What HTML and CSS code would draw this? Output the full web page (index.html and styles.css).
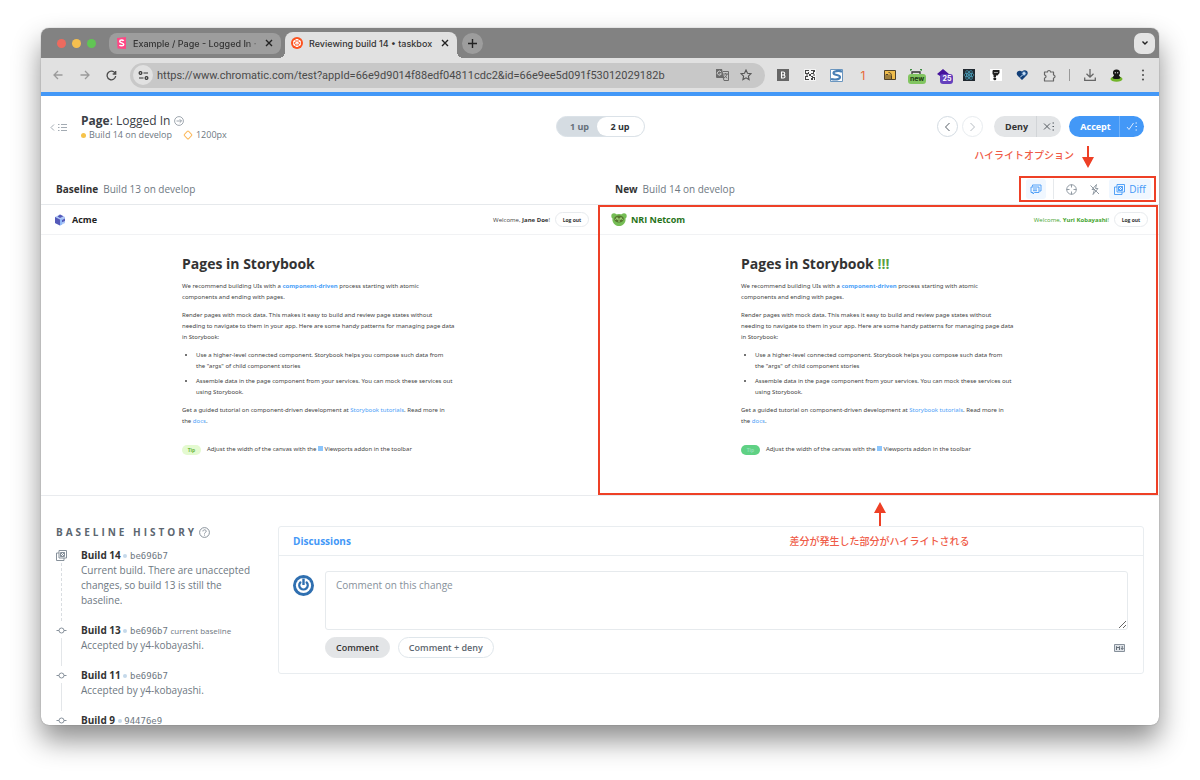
FILE: index.html
```html
<!DOCTYPE html>
<html>
<head>
<meta charset="utf-8">
<meta name="viewport" content="width=device-width, initial-scale=1.0">
<title>Reviewing build 14 • taskbox</title>
<link rel="stylesheet" href="styles.css">
</head>
<body>
<div class="window">

	<!-- browser tabs -->
	<div class="tabstrip">
		<div class="lights"><i class="red"></i><i class="yellow"></i><i class="green"></i></div>
		<div class="tab">
			<svg width="11" height="12" viewBox="0 0 11 12"><path fill="#ff4785" d="M1 1l9-1v12l-8.500-.5z"/><path fill="none" stroke="#fff" stroke-width="1.500" d="M7.600 3.900C7 2.800 3.700 2.700 3.700 4.400c0 1.800 4 1.200 4 3.100 0 1.800-3.500 1.700-4.200.3"/></svg>
			<span class="tab-title fade">Example / Page - Logged In ·</span>
			<button class="close" aria-label="Close tab"><svg width="8" height="8" viewBox="0 0 8 8"><path d="M1 1l6 6M7 1L1 7"/></svg></button>
		</div>
		<div class="tab active">
			<svg width="12" height="12" viewBox="0 0 12 12"><circle cx="6" cy="6" r="6" fill="#fc521f"/><g fill="none" stroke="#fff" stroke-width="1"><path d="M6 2.200l3.300 1.900v3.800L6 9.800 2.700 7.900V4.100z"/><path d="M6 2.200v3.600l3.300 2.100M2.700 4.100L6 5.800l-3.300 2.100M9.300 4.100L6 5.800v4"/></g></svg>
			<span class="tab-title">Reviewing build 14 • taskbox</span>
			<button class="close" aria-label="Close tab"><svg width="8" height="8" viewBox="0 0 8 8"><path d="M1 1l6 6M7 1L1 7"/></svg></button>
		</div>
		<button class="newtab" aria-label="New tab"><svg width="9" height="9" viewBox="0 0 9 9"><path d="M4.500 0v9M0 4.500h9"/></svg></button>
		<button class="tabmenu" aria-label="Search tabs"><svg width="8" height="6" viewBox="0 0 8 6"><path d="M1.500 1.500L4 4l2.500-2.500"/></svg></button>
	</div>

	<!-- address bar -->
	<div class="toolbar">
		<button class="nav off" aria-label="Back"><svg width="10" height="10" viewBox="0 0 10 10"><path d="M9.500 5H1M5 1L1 5l4 4"/></svg></button>
		<button class="nav off" aria-label="Forward"><svg width="10" height="10" viewBox="0 0 10 10"><path d="M.5 5H9M5 1l4 4-4 4"/></svg></button>
		<button class="nav" aria-label="Reload"><svg width="11" height="11" viewBox="0 0 11 11"><path d="M9.200 3.400A4.300 4.300 0 1 0 9.700 6M9.700 1v3H6.700"/></svg></button>
		<div class="address">
			<button class="site" aria-label="Site information"><svg width="11" height="9" viewBox="0 0 11 9"><circle cx="2.500" cy="2" r="1.400"/><circle cx="8.500" cy="7" r="1.400"/><path d="M5.500 2H10M1 7h4.500"/></svg></button>
			<input class="url" type="text" aria-label="Address" value="https://www.chromatic.com/test?appId=66e9d9014f88edf04811cdc2&amp;id=66e9ee5d091f53012029182b">
			<button class="in-url" aria-label="Translate"><svg width="13" height="12" viewBox="0 0 13 12"><path fill="#6b6b6b" d="M0 0h6l2.300 9H1a1 1 0 0 1-1-1z"/><path fill="none" stroke="#d0d0d0" stroke-width="1" d="M5.200 3.200a2 2 0 1 0 .1 1.600H3.600"/><path fill="none" stroke="#6b6b6b" d="M7 2.500h5.500v9H8L7.300 9M7.300 5H12M9.600 4v1M11 5c-.5 2-1.700 3.300-3 4M8.700 6.500c.6 1.300 1.500 2 2.500 2.700"/></svg></button>
			<button class="in-url" aria-label="Bookmark"><svg width="12" height="12" viewBox="0 0 12 12"><path fill="none" stroke="#555" stroke-width="1.100" d="M6 1l1.500 3.300 3.500.4-2.600 2.400.7 3.500L6 8.800l-3.100 1.800.7-3.500L1 4.700l3.500-.4z"/></svg></button>
		</div>
		<div class="extensions">
			<button aria-label="Bold"><svg width="12" height="12" viewBox="0 0 12 12"><path fill="#666" d="M0 0h12v12H0z"/><path fill="none" stroke="#fff" stroke-width="1.100" d="M4.500 3v6h1.800c2.300 0 2.300-3 0-3H4.500h1.600c2.200 0 2.200-3 0-3z"/></svg></button>
			<button aria-label="QR code"><svg width="12" height="12" viewBox="0 0 12 12"><path fill="#f4f4f4" d="M0 0h12v12H0z"/><path fill="#444" d="M1 1h4v1H2v2h2V3h1v2H1zM7 1h4v2h-1v2H7V4h2V2H7zM5 5h2v2H5zM1 7h3v1H2v2h3v1H1zM7 7h2v1h2v3h-1V9H9v2H7V9h1V8H7zM2 5.500h2v1H2zM9 5.500h2v1H9z"/></svg></button>
			<button aria-label="Similarweb"><svg width="13" height="13" viewBox="0 0 13 13"><path fill="#fff" stroke="#6b96bf" d="M.5.500h12v12H.5z"/><path fill="none" stroke="#4a80b5" stroke-width="2.200" d="M12 2.600C9 1.500 3.500 1.800 3.500 4c0 2.800 6.500 1.200 6.500 4 0 2.600-5 3-9 2"/></svg></button>
			<button class="ext-one">1</button>
			<button aria-label="Hatena"><svg width="12" height="10" viewBox="0 0 12 10"><path fill="#f0bd4c" stroke="#51432a" d="M.5.500h11v9H.5z"/><path fill="none" stroke="#51432a" d="M2 9V4.500h2V9M6 9V4.500M4.500 2.500c2 0 3 1.500 3 3V9"/></svg></button>
			<button class="ext-badge" aria-label="Screenshot"><svg width="12" height="12" viewBox="0 0 12 12"><path fill="none" stroke="#3f8f42" stroke-width="1.300" d="M0 2V.6h2M12 2V.6h-2"/><path fill="none" stroke="#333" stroke-width="1.300" d="M2 5V3h8v2"/></svg><span class="badge lime">new</span></button>
			<button class="ext-badge" aria-label="Notifications"><svg width="12" height="12" viewBox="0 0 12 12"><path fill="#45139c" d="M6 0l6 5-2 2v2H3V7L0 5z"/></svg><span class="badge violet">25</span></button>
			<button aria-label="React"><svg width="12" height="12" viewBox="0 0 12 12"><path fill="#20282f" d="M0 0h12v12H0z"/><g fill="none" stroke="#53b9d8" stroke-width=".6"><ellipse cx="6" cy="6" rx="5" ry="2"/><ellipse cx="6" cy="6" rx="5" ry="2" transform="rotate(60 6 6)"/><ellipse cx="6" cy="6" rx="5" ry="2" transform="rotate(120 6 6)"/></g><circle cx="6" cy="6" r=".9" fill="#53b9d8"/></svg></button>
			<button aria-label="Fonts"><svg width="12" height="12" viewBox="0 0 12 12"><path fill="#fff" d="M0 0h12v12H0z"/><path fill="#222" d="M3 1h6.500v3L7.500 6.500H6V8H3.500V6L2.500 5V2z"/><circle cx="4.800" cy="9.800" r="1.500" fill="#222"/><path stroke="#999" d="M4 3.500h4"/></svg></button>
			<button aria-label="Health"><svg width="13" height="12" viewBox="0 0 13 12"><path fill="#123f78" d="M6 11L1.500 6.500C-1 3.500 3 0 6 2.500 9-.5 13.500 2.500 11 6z"/><circle cx="8" cy="4.500" r="2" fill="#cfe2f5" stroke="#3c6ea6"/><path stroke="#cfe2f5" d="M6.500 6L4 8.500"/></svg></button>
			<button aria-label="Extensions"><svg width="13" height="13" viewBox="0 0 13 13"><path fill="none" stroke="#666" stroke-width="1.200" stroke-linejoin="round" d="M1.500 3h3c0-2 3-2 3 0h3v3c2 0 2 3 0 3v3h-9V9c2 0 2-3 0-3z"/></svg></button>
			<i class="bar"></i>
			<button aria-label="Downloads"><svg width="12" height="12" viewBox="0 0 12 12"><path fill="none" stroke="#666" stroke-width="1.300" d="M6 0v8M2.500 4.800L6 8.200l3.500-3.400M.7 8.500v2.800h10.600V8.500"/></svg></button>
			<button aria-label="Profile"><svg width="13" height="13" viewBox="0 0 13 13"><ellipse cx="6.500" cy="10" rx="6" ry="2.800" fill="#73b52b"/><path fill="#151515" d="M6.500 0.500C9 .5 10.300 2 10 4.500L9 6.500l1.500 2c0 2-8 2-8 0l1.500-2-1-2C2.700 2 4 .500 6.500.500z"/><circle cx="5.300" cy="3.800" r=".7" fill="#ccc"/><circle cx="7.700" cy="3.800" r=".7" fill="#ccc"/></svg></button>
			<button aria-label="Menu"><svg width="4" height="12" viewBox="0 0 4 12"><g fill="#555"><circle cx="2" cy="1.500" r="1.100"/><circle cx="2" cy="6" r="1.100"/><circle cx="2" cy="10.500" r="1.100"/></g></svg></button>
		</div>
	</div>

	<div class="page">
		<div class="header">
			<div class="story">
				<button class="back" aria-label="Back to list">
					<svg width="18" height="9" viewBox="0 0 18 9"><path fill="none" stroke="#a3abb3" d="M4 1.500l-3 3 3 3M8 1.500h1.500M8 4.500h1.500M8 7.500h1.500M11 1.500h6M11 4.500h6M11 7.500h6"/></svg>
				</button>
				<div>
					<h1><span><b>Page</b>: Logged In</span> <svg width="10" height="10" viewBox="0 0 10 10"><g fill="none" stroke="#87919b" stroke-width=".8"><circle cx="5" cy="5" r="4.400"/><path d="M2.500 5h5M5.700 3.200L7.500 5 5.700 6.800"/></g></svg></h1>
					<div class="meta">
						<i class="dot"></i><span>Build 14 on develop</span>
						<svg width="10" height="10" viewBox="0 0 10 10"><rect x="2" y="2" width="6" height="6" rx="1" transform="rotate(45 5 5)" fill="none" stroke="#fcb95c"/></svg><span>1200px</span>
					</div>
				</div>
			</div>
			<div class="switch">
				<button>1 up</button><button class="on">2 up</button>
			</div>
			<div class="actions">
				<button class="round" aria-label="Previous"><svg width="7" height="10" viewBox="0 0 7 10"><path d="M5.500 1l-4 4 4 4"/></svg></button>
				<button class="round last" aria-label="Next"><svg width="7" height="10" viewBox="0 0 7 10"><path d="M1.500 1l4 4-4 4"/></svg></button>
				<div class="split deny">
					<button>Deny</button><button class="batch" aria-label="Deny batch"><svg width="12" height="9" viewBox="0 0 12 9"><path d="M1 1.500l6 6M7 1.500l-6 6M9.500 1h1.500M9.500 4.500h1.500M9.500 8h1.500"/></svg></button>
				</div>
				<div class="split accept">
					<button>Accept</button><button class="batch" aria-label="Accept batch"><svg width="12" height="9" viewBox="0 0 12 9"><path d="M1 5l2 2.500L7.500 1M9.500 1h1.500M9.500 4.500h1.500M9.500 8h1.500"/></svg></button>
				</div>
			</div>
		</div>

		<div class="labels">
			<div class="label"><b>Baseline</b> Build 13 on develop</div>
			<div class="label">
				<b>New</b> Build 14 on develop
				<div class="tools">
					<button class="tool on" aria-label="Comments"><svg width="12" height="11" viewBox="0 0 12 11"><path d="M2.500 2.500V1h8.500v6H9.500M1 3h8v5.500H4.500L3 10V8.500H1zM3 5h4M3 6.700h4"/></svg></button>
					<i class="rule"></i>
					<button class="tool" aria-label="Spotlight"><svg width="11" height="11" viewBox="0 0 11 11"><circle cx="5.500" cy="5.500" r="4.800"/><path d="M5.500.500v3M5.500 7.500v3M.5 5.500h3M7.500 5.500h3"/></svg></button>
					<button class="tool" aria-label="Strobe"><svg width="10" height="11" viewBox="0 0 10 11"><path d="M6.500.500L2 5.500h2.500L3 10.500l5-6H5.500zM.5 1.500l8.500 8.500"/></svg></button>
					<button class="tool on diff"><svg width="11" height="11" viewBox="0 0 11 11"><path d="M3 .5h7.500V8H3zM.500 3v7.500H8M.500 3H3M8 8v2.500M4.500 2.500h4v4h-4zM4.500 4.500l2-2M4.500 6.500l4-4M6.500 6.500l2-2"/></svg>Diff</button>
					<div class="note-frame"></div>
					<div class="note note-left">ハイライトオプション</div>
					<svg class="arrow-down" width="12" height="22" viewBox="0 0 12 22"><path fill="#ee4026" d="M5 0h2v11h5L6 22 0 11h5z"/></svg>
				</div>
			</div>
		</div>

		<div class="compare">
			<div class="pane">
				<div class="app-bar">
					<svg width="12" height="12" viewBox="0 0 12 12"><path fill="#b0c8f7" d="M6 .500L11 3v6l-5 2.500L1 9V3z"/><path fill="#555ab9" d="M1 3l5 2.500v6L1 9zM6 .500L9.500 2.200 6 4 3.500 2.500zM8 6l3-1.500V7L8 8.300z"/><path fill="#91baf8" d="M6 5.500L8 4.500v6l-2 1z"/></svg>
					<b class="brand">Acme</b>
					<span class="welcome">Welcome, <b>Jane Doe</b>!</span>
					<button class="logout">Log out</button>
				</div>
				<div class="article">
					<h2>Pages in Storybook</h2>
					<p>We recommend building UIs with a <a href="#"><b>component-driven</b></a> process starting with atomic<br>components and ending with pages.</p>
					<p>Render pages with mock data. This makes it easy to build and review page states without<br>needing to navigate to them in your app. Here are some handy patterns for managing page data<br>in Storybook:</p>
					<ul>
						<li>Use a higher-level connected component. Storybook helps you compose such data from<br>the "args" of child component stories</li>
						<li>Assemble data in the page component from your services. You can mock these services out<br>using Storybook.</li>
					</ul>
					<p>Get a guided tutorial on component-driven development at <a href="#">Storybook tutorials</a>. Read more in<br>the <a href="#">docs</a>.</p>
					<div class="tip-row"><span class="tip">Tip</span><span>Adjust the width of the canvas with the <i class="vp"></i> Viewports addon in the toolbar</span></div>
				</div>
			</div>
			<div class="pane new">
				<div class="app-bar">
					<svg width="16" height="13" viewBox="0 0 16 13"><g fill="#76bd55"><circle cx="3" cy="3" r="2.700"/><circle cx="13" cy="3" r="2.700"/><path d="M8 1c5 0 7 3 6.500 6.500C14 11 11 13 8 13s-6-2-6.500-5.500C1 4 3 1 8 1z"/></g><ellipse cx="8" cy="6" rx="4.800" ry="3.400" fill="#55772f"/><path fill="none" stroke="#a5d67c" d="M4.500 7L6 4.500 7 7M9 7l1-2.500L11.500 7M8 5v4"/></svg>
					<b class="brand">NRI Netcom</b>
					<span class="welcome">Welcome, <b>Yuri Kobayashi</b>!</span>
					<button class="logout">Log out</button>
				</div>
				<div class="article">
					<h2>Pages in Storybook <span class="changed">!!!</span></h2>
					<p>We recommend building UIs with a <a href="#"><b>component-driven</b></a> process starting with atomic<br>components and ending with pages.</p>
					<p>Render pages with mock data. This makes it easy to build and review page states without<br>needing to navigate to them in your app. Here are some handy patterns for managing page data<br>in Storybook:</p>
					<ul>
						<li>Use a higher-level connected component. Storybook helps you compose such data from<br>the "args" of child component stories</li>
						<li>Assemble data in the page component from your services. You can mock these services out<br>using Storybook.</li>
					</ul>
					<p>Get a guided tutorial on component-driven development at <a href="#">Storybook tutorials</a>. Read more in<br>the <a href="#">docs</a>.</p>
					<div class="tip-row"><span class="tip">Tip</span><span>Adjust the width of the canvas with the <i class="vp"></i> Viewports addon in the toolbar</span></div>
				</div>
				<div class="note-frame"></div>
				<div class="note note-below">
					<svg width="12" height="24" viewBox="0 0 12 24"><path fill="#ee4026" d="M5 24h2V11h5L6 0 0 11h5z"/></svg>
					差分が発生した部分がハイライトされる
				</div>
			</div>
		</div>

		<div class="bottom">
			<div class="history">
				<h3>Baseline history <svg width="11" height="11" viewBox="0 0 11 11"><g fill="none" stroke="#7d8791" stroke-width=".9"><circle cx="5.500" cy="5.500" r="4.900"/><path d="M3.900 4.400c0-2.200 3.300-2 3.300-.1 0 1.200-1.700 1.200-1.700 2.300M5.500 7.600v1"/></g></svg></h3>
				<div class="build current">
					<div class="track"><svg width="11" height="11" viewBox="0 0 11 11"><path fill="none" stroke="#87919b" d="M3 .5h7.500V8H3zM.500 3v7.500H8M.500 3H3M8 8v2.500M4.500 2.500h4v4h-4zM4.500 4.500l2-2M4.500 6.500l4-4M6.500 6.500l2-2"/></svg></div>
					<div><b>Build 14</b> <i class="sep"></i> <code>be696b7</code><p>Current build. There are unaccepted changes, so build 13 is still the baseline.</p></div>
				</div>
				<div class="build">
					<div class="track"><svg width="11" height="11" viewBox="0 0 11 11"><g fill="none" stroke="#87919b"><circle cx="5.500" cy="5.500" r="2.500"/><path d="M.500 5.500H3M8 5.500h2.500"/></g></svg></div>
					<div><b>Build 13</b> <i class="sep"></i> <code>be696b7</code> <small>current baseline</small><p>Accepted by y4-kobayashi.</p></div>
				</div>
				<div class="build">
					<div class="track"><svg width="11" height="11" viewBox="0 0 11 11"><g fill="none" stroke="#87919b"><circle cx="5.500" cy="5.500" r="2.500"/><path d="M.500 5.500H3M8 5.500h2.500"/></g></svg></div>
					<div><b>Build 11</b> <i class="sep"></i> <code>be696b7</code><p>Accepted by y4-kobayashi.</p></div>
				</div>
				<div class="build">
					<div class="track"><svg width="11" height="11" viewBox="0 0 11 11"><g fill="none" stroke="#87919b"><circle cx="5.500" cy="5.500" r="2.500"/><path d="M.500 5.500H3M8 5.500h2.500"/></g></svg></div>
					<div><b>Build 9</b> <i class="sep"></i> <code>94476e9</code></div>
				</div>
			</div>

			<div class="discussions">
				<div class="disc-head">Discussions</div>
				<div class="disc-body">
					<svg class="avatar" width="21" height="21" viewBox="0 0 21 21"><circle cx="10.500" cy="10.500" r="10.500" fill="#2f6fb0"/><circle cx="10.500" cy="10.500" r="7.600" fill="#fff"/><path fill="none" stroke="#2f6fb0" stroke-width="2.400" stroke-linecap="round" d="M7.300 7.500a4.200 4.200 0 1 0 6.400 0"/><path fill="none" stroke="#2f6fb0" stroke-width="2.400" d="M10.500 3.500V10"/></svg>
					<div class="comment">
						<textarea aria-label="Comment" placeholder="Comment on this change"></textarea>
						<div class="comment-row">
							<button class="pill gray">Comment</button>
							<button class="pill">Comment + deny</button>
							<svg class="md" width="11" height="8" viewBox="0 0 11 8"><path fill="#dfe3e8" stroke="#87919b" d="M.5.500h10v7H.5z"/><path fill="none" stroke="#66707a" d="M2.500 6V2.500L4 4l1.500-1.500V6M8.200 2v3.500M7 4l1.200 1.500L9.500 4"/></svg>
						</div>
					</div>
				</div>
			</div>
		</div>
	</div>
</div>
</body>
</html>
```
FILE: styles.css
```css
* {
	box-sizing: border-box;
}

body,h1,h2,h3,p,ul {
	margin: 0;
	padding: 0;
}

body {
	height: 100vh;
	padding: 28px 41px 55px;
	background: #fff;
	font-family: "Open Sans", "Noto Sans CJK JP", sans-serif;
	font-size: 10px;
	color: #6e7882;
	overflow: hidden;
}

button {
	display: flex;
	align-items: center;
	justify-content: center;
	margin: 0;
	padding: 0;
	border: 0;
	background: none;
	font-family: inherit;
	color: inherit;
}

svg {
	display: block;
	flex: none;
}

a {
	color: #4ba1f8;
	text-decoration: none;
}

.window {
	display: flex;
	flex-direction: column;
	height: 100%;
	border-radius: 8px;
	background: #fff;
	box-shadow: 0 0 1px rgba(0,0,0,.5), 0 15px 28px rgba(0,0,0,.45);
	overflow: hidden;
}

/* browser chrome */
.tabstrip {
	display: flex;
	align-items: center;
	flex: none;
	height: 30px;
	padding: 0 4px 0 16px;
	background: #828282;
	font: 500 9px Inter, "Liberation Sans", sans-serif;
	color: #333;
}

.lights {
	display: flex;
	gap: 6px;
	width: 52px;
}

.lights i {
	width: 9px;
	height: 9px;
	border-radius: 50%;
}

.red { background: #ed6a5e; }
.yellow { background: #f5bf4f; }
.green { background: #61c554; }

.tab {
	display: flex;
	align-items: center;
	gap: 6px;
	width: 172px;
	height: 21px;
	padding: 0 8px 0 7px;
	border-radius: 8px;
	background: #9d9d9d;
}

.tab.active {
	position: relative;
	align-self: flex-end;
	height: 26px;
	margin: 0 5px 0 4px;
	padding: 0 8px 4px 6px;
	border-radius: 8px 8px 0 0;
	background: #e1e1e1;
}

.tab.active:before,
.tab.active:after {
	content: "";
	position: absolute;
	bottom: 0;
	width: 6px;
	height: 6px;
}

.tab.active:before {
	left: -6px;
	background: radial-gradient(circle at 0 0, transparent 6px, #e1e1e1 6px);
}

.tab.active:after {
	right: -6px;
	background: radial-gradient(circle at 100% 0, transparent 6px, #e1e1e1 6px);
}

.tab-title {
	flex: 1;
	white-space: nowrap;
	overflow: hidden;
}

.fade {
	-webkit-mask-image: linear-gradient(90deg, #000 90%, rgba(0,0,0,.4));
	mask-image: linear-gradient(90deg, #000 90%, rgba(0,0,0,.4));
}

.close svg,
.newtab svg,
.tabmenu svg {
	fill: none;
	stroke: #222;
	stroke-width: 1.4;
}

.newtab {
	width: 21px;
	height: 21px;
	border-radius: 50%;
	background: #9d9d9d;
}

.tabmenu {
	width: 21px;
	height: 21px;
	margin-left: auto;
	border-radius: 7px;
	background: #e4e4e4;
}

.toolbar {
	display: flex;
	align-items: center;
	flex: none;
	height: 34px;
	padding: 0 3px;
	background: #e1e1e1;
}

.nav {
	width: 27px;
}

.nav svg {
	fill: none;
	stroke: #4c4c4c;
	stroke-width: 1.3;
}

.nav.off svg {
	stroke: #9b9b9b;
}

.address {
	display: flex;
	align-items: center;
	flex: 1;
	height: 25px;
	margin: 0 5px;
	padding: 0 7px 0 3px;
	border-radius: 13px;
	background: #c8c8c8;
}

.site {
	width: 20px;
	height: 20px;
	border-radius: 50%;
	background: #e1e1e1;
}

.site svg {
	fill: none;
	stroke: #333;
	stroke-width: 1.2;
}

.url {
	flex: 1;
	min-width: 0;
	padding: 0 0 0 4px;
	border: 0;
	background: none;
	font: 11px Roboto, "Liberation Sans", sans-serif;
	color: #4a4a4a;
	outline: 0;
}

.in-url {
	width: 24px;
}

.extensions {
	display: flex;
	align-items: center;
	flex: none;
	width: 386px;
}

.extensions button {
	flex: 1;
}

.bar {
	width: 14px;
	height: 12px;
	background: linear-gradient(#999, #999) center / 1px 100% no-repeat;
}

.ext-one {
	font: 12px Inter, sans-serif;
	color: #e8683a;
}

.ext-badge {
	position: relative;
}

.badge {
	position: absolute;
	top: 5px;
	left: 5px;
	padding: 0 2px;
	border-radius: 3px;
	font: bold 7px/10px Inter, sans-serif;
}

.lime { background: #82c561; color: #1d3b13; }
.violet { left: 11px; background: #6440bd; color: #fff; }

/* review page */
.page {
	flex: 1;
	min-height: 0;
	border-top: 4px solid #4398f7;
	overflow: hidden;
}

.header {
	display: grid;
	grid-template-columns: 1fr auto 1fr;
	align-items: start;
	height: 78px;
	padding: 16px 15px 0;
}

.story {
	display: flex;
	margin: 1px 0 0 -6px;
}

.back {
	width: 18px;
	height: 28px;
	margin-right: 13px;
}

h1 {
	display: flex;
	align-items: center;
	gap: 4px;
	font-size: 12px;
	line-height: 16px;
	font-weight: normal;
	color: #3a4046;
}

.meta {
	display: flex;
	align-items: center;
	gap: 3px;
	font-size: 9px;
	line-height: 12px;
}

.meta svg {
	margin-left: 8px;
}

.dot {
	width: 5px;
	height: 5px;
	border-radius: 50%;
	background: #f6c34a;
}

.switch {
	display: flex;
	height: 21px;
	margin-top: 4px;
	border: 1px solid #dbe2e8;
	border-radius: 11px;
	background: #d5dce2;
}

.switch button {
	width: 40px;
	padding-left: 6px;
	font-size: 9px;
	font-weight: bold;
	color: #66707a;
}

.switch .on {
	width: 47px;
	padding-left: 0;
	border-radius: 10px;
	background: #fff;
	color: #2e3438;
}

.actions {
	display: flex;
	justify-content: flex-end;
	margin-top: 4px;
}

.round {
	width: 21px;
	height: 21px;
	margin-right: 4px;
	border: 1px solid #d3dbe2;
	border-radius: 50%;
}

.round svg {
	fill: none;
	stroke: #555d65;
}

.round.last {
	margin-right: 11px;
	border-color: #e8ecef;
}

.round.last svg {
	stroke: #b5bbc1;
}

.split {
	display: flex;
	height: 21px;
	border-radius: 11px;
	overflow: hidden;
}

.split button {
	width: 42px;
	padding-left: 3px;
	font-size: 9px;
	font-weight: bold;
}

.split .batch {
	width: 25px;
	padding-left: 0;
	border-left: 1px solid rgba(255,255,255,.25);
}

.split svg {
	fill: none;
}

.deny {
	margin-right: 8px;
	background: #e3e5e7;
	color: #333;
}

.deny svg {
	stroke: #555b61;
}

.deny .batch {
	border-color: #d2d5d8;
}

.accept {
	background: #4398f7;
	color: #fff;
}

.accept button:first-child {
	width: 50px;
}

.accept svg {
	stroke: #d9eaff;
}

.labels {
	display: grid;
	grid-template-columns: 1fr 1fr;
	height: 31px;
	border-bottom: 1px solid #e6e9ec;
}

.label {
	display: flex;
	align-items: center;
	gap: 5px;
	padding: 0 8px 0 15px;
}

.label b {
	color: #333;
}

.tools {
	position: relative;
	display: flex;
	align-items: center;
	gap: 4px;
	margin-left: auto;
}

.tool {
	width: 20px;
	height: 20px;
	border-radius: 3px;
	font-size: 10px;
}

.tool svg {
	fill: none;
	stroke: #87919b;
	stroke-width: .9;
}

.tool.on {
	background: #f0f7ff;
	color: #4398f7;
}

.tool.on svg {
	stroke: #4398f7;
}

.tool.diff {
	gap: 4px;
	width: 42px;
}

.rule {
	width: 1px;
	height: 20px;
	margin: 0 3px;
	background: #e6e9ec;
}

/* red marks drawn over the page */
.note-frame {
	position: absolute;
	top: 0;
	right: 1px;
	bottom: 0;
	left: -2px;
	border: 2px solid #ee4026;
	pointer-events: none;
}

.tools .note-frame {
	top: -3px;
	right: -5px;
	bottom: -3px;
	left: -7px;
}

.note {
	position: absolute;
	color: #ef5b47;
	font: 500 10px/16px "Noto Sans CJK JP", sans-serif;
	white-space: nowrap;
}

.note-left {
	right: 77px;
	bottom: 36px;
}

.arrow-down {
	position: absolute;
	right: 57px;
	bottom: 31px;
}

.note-below {
	top: 100%;
	right: 0;
	left: 0;
	display: flex;
	flex-direction: column;
	align-items: center;
	gap: 7px;
	padding-top: 7px;
}

.compare {
	display: grid;
	grid-template-columns: 1fr 1fr;
	border-bottom: 1px solid #e9ebee;
}

.pane {
	position: relative;
	min-height: 290px;
	color: #444;
	font-size: 6px;
}

.app-bar {
	display: flex;
	align-items: center;
	height: 30px;
	padding: 0 11px 0 13px;
	border-bottom: 1px solid #f1f2f4;
}

.new .app-bar {
	padding-left: 11px;
}

.brand {
	margin: 0 auto 0 6px;
	font-size: 9px;
	color: #222;
}

.new .brand {
	margin-left: 4px;
	color: #28731a;
}

.welcome b {
	color: #333;
}

.new .welcome,
.new .welcome b {
	color: #46a52f;
}

.logout {
	width: 34px;
	height: 15px;
	margin-left: 5px;
	border: 1px solid #e8ebee;
	border-radius: 8px;
	font-size: 5px;
	font-weight: bold;
	color: #333;
}

.article {
	width: 277px;
	margin: 0 auto;
	padding-top: 19px;
	font-family: "Noto Sans", sans-serif;
	line-height: 11px;
	white-space: nowrap;
}

.article h2 {
	margin-bottom: 7px;
	font-family: "Open Sans", sans-serif;
	font-size: 14px;
	line-height: 20px;
	color: #333;
}

.changed {
	color: #5aa141;
}

.article p,
.article ul {
	margin-bottom: 7px;
}

.article ul {
	padding-left: 14px;
}

.article li + li {
	margin-top: 4px;
}

.tip-row {
	display: flex;
	align-items: center;
	gap: 6px;
	margin-top: 17px;
}

.tip {
	width: 19px;
	border-radius: 5px;
	background: #e4fad0;
	color: #6cb83f;
	font-size: 5px;
	font-weight: bold;
	line-height: 10px;
	text-align: center;
}

.new .tip {
	background: #5fd184;
	color: #8fdfb6;
}

.vp {
	display: inline-block;
	width: 5px;
	height: 5px;
	background: #8cc5fb;
}

.bottom {
	display: grid;
	grid-template-columns: 207px 1fr;
	gap: 15px;
	align-items: start;
	padding: 30px 15px 0;
}

h3 {
	display: flex;
	align-items: center;
	gap: 2px;
	margin-bottom: 10px;
	font-size: 10px;
	line-height: 12px;
	letter-spacing: 3px;
	text-transform: uppercase;
	color: #5c6670;
}

.build {
	display: flex;
	gap: 14px;
	font-size: 10px;
	line-height: 15px;
}

.build b {
	color: #333;
}

.build p {
	margin-bottom: 15px;
}

.build code {
	font: 9px "DejaVu Sans Mono", monospace;
}

.build small {
	font-size: 8px;
}

.track {
	display: flex;
	flex-direction: column;
	align-items: center;
	flex: none;
	width: 11px;
	padding-top: 2px;
}

.track:after {
	content: "";
	flex: 1;
	width: 1px;
	margin: 2px 0;
	background: #e3e6e9;
}

.current .track:after {
	width: 0;
	border-left: 1px dashed #d9dde1;
	background: none;
}

.sep {
	display: inline-block;
	width: 4px;
	height: 4px;
	border-radius: 50%;
	background: #c5d9ea;
	vertical-align: middle;
}

.discussions {
	border: 1px solid #e9edf0;
	border-radius: 3px;
}

.disc-head {
	padding: 0 14px;
	border-bottom: 1px solid #e9edf0;
	font-weight: bold;
	line-height: 28px;
	color: #4398f7;
}

.disc-body {
	display: flex;
	gap: 11px;
	padding: 15px 15px 15px 14px;
}

.avatar {
	margin-top: 4px;
}

.comment {
	flex: 1;
}

.comment textarea {
	display: block;
	width: 100%;
	height: 59px;
	padding: 6px 10px;
	border: 1px solid #e6eaed;
	border-radius: 3px;
	font: 10px/15px "Open Sans", sans-serif;
	color: #333;
	outline: 0;
}

.comment textarea::placeholder {
	color: #87919b;
}

.comment-row {
	display: flex;
	align-items: center;
	gap: 8px;
	margin-top: 7px;
}

.pill {
	height: 21px;
	padding: 0 10px;
	border: 1px solid #dfe6eb;
	border-radius: 11px;
	font-size: 9px;
	font-weight: 600;
	color: #5c6670;
}

.pill.gray {
	border-color: #e3e5e7;
	background: #e3e5e7;
	color: #333;
}

.md {
	margin: 0 3px 0 auto;
}
```
